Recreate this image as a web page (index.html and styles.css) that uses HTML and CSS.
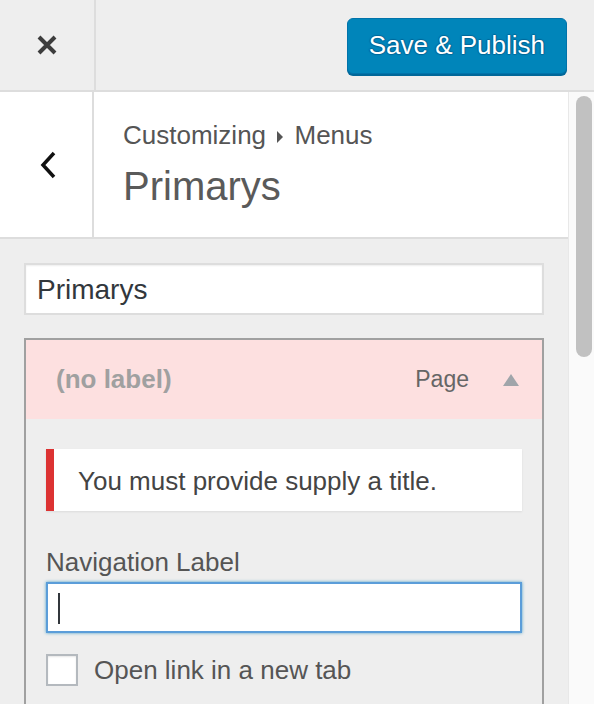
FILE: index.html
```html
<!DOCTYPE html>
<html lang="en">

<head>
    <meta charset="UTF-8">
    <meta name="viewport" content="width=device-width, initial-scale=1.0">
    <title>Customizing Menus</title>
    <link rel="stylesheet" href="styles.css">
</head>

<body>
    <div class="topbar">
        <div class="close-btn">
            <svg width="22" height="22" viewBox="0 0 22 22">
                <path d="M3 3 L19 19 M19 3 L3 19" stroke="#3c3c3c" stroke-width="4" fill="none" />
            </svg>
        </div>
        <div class="save-btn">Save &amp; Publish</div>
    </div>

    <div class="main">
        <div class="panel">
            <div class="section-head">
                <div class="back-btn">
                    <svg width="16" height="28" viewBox="0 0 16 28">
                        <path d="M14 2 L3 14 L14 26" stroke="#111" stroke-width="3.5" fill="none" />
                    </svg>
                </div>
                <div class="section-info">
                    <div class="crumbs">Customizing <span class="crumb-arrow"></span> Menus</div>
                    <div class="section-title">Primarys</div>
                </div>
            </div>

            <div class="content">
                <div class="menu-name">Primarys</div>

                <div class="menu-item">
                    <div class="item-head">
                        <span class="item-title">(no label)</span>
                        <span class="item-type">Page</span>
                        <span class="item-toggle"></span>
                    </div>
                    <div class="item-body">
                        <div class="notice">You must provide supply a title.</div>
                        <div class="field-label">Navigation Label</div>
                        <div class="field-input"><span class="caret"></span></div>
                        <div class="check-row">
                            <span class="checkbox"></span>
                            <span>Open link in a new tab</span>
                        </div>
                    </div>
                </div>
            </div>
        </div>
        <div class="scrollbar">
            <div class="thumb"></div>
        </div>
    </div>
</body>

</html>
```

FILE: styles.css
```css
body {
    margin: 0;
    width: 594px;
    height: 704px;
    overflow: hidden;
    background: #eeeeee;
    font-family: "Liberation Sans", Arial, sans-serif;
    color: #555;
}

.topbar {
    height: 90px;
    border-bottom: 2px solid #dddddd;
    display: flex;
    align-items: center;
}

.close-btn {
    width: 94px;
    height: 90px;
    border-right: 2px solid #dddddd;
    display: flex;
    align-items: center;
    justify-content: center;
}

.save-btn {
    margin-left: auto;
    margin-right: 27px;
    margin-top: 2px;
    height: 56px;
    padding: 0 21px;
    box-sizing: border-box;
    background: #0085ba;
    border: 1px solid #0073aa;
    border-radius: 6px;
    box-shadow: 0 2px 0 #006799;
    color: #fff;
    font-size: 26px;
    line-height: 52px;
    text-shadow: 0 -1px 1px #006799, 1px 0 1px #006799, 0 1px 1px #006799, -1px 0 1px #006799;
}

.main {
    display: flex;
    height: 612px;
    overflow: hidden;
}

.panel {
    width: 568px;
    height: 612px;
    overflow: hidden;
}

.section-head {
    height: 145px;
    background: #fff;
    border-bottom: 2px solid #dddddd;
    display: flex;
}

.back-btn {
    width: 94px;
    border-right: 2px solid #dddddd;
    display: flex;
    align-items: center;
    justify-content: center;
    padding-left: 4px;
    box-sizing: border-box;
}

.section-info {
    padding: 28px 0 0 29px;
}

.crumbs {
    font-size: 26px;
    line-height: 31px;
    color: #555;
}

.crumb-arrow {
    display: inline-block;
    width: 0;
    height: 0;
    border-top: 6px solid transparent;
    border-bottom: 6px solid transparent;
    border-left: 6px solid #555;
    margin: 0 4px 1px 4px;
}

.section-title {
    margin-top: 11px;
    font-size: 40px;
    line-height: 48px;
    font-weight: 300;
    color: #5a5a5a;
}

.content {
    padding: 24px 24px 0 24px;
}

.menu-name {
    height: 52px;
    box-sizing: border-box;
    background: #fff;
    border: 2px solid #dddddd;
    box-shadow: inset 0 1px 2px rgba(0, 0, 0, 0.07);
    padding-left: 11px;
    font-size: 28px;
    line-height: 50px;
    color: #32373c;
}

.menu-item {
    margin-top: 23px;
    border: 2px solid #a0a0a0;
    border-bottom: none;
}

.item-head {
    height: 79px;
    background: #fde0e0;
    display: flex;
    align-items: center;
    padding: 0 23px 0 30px;
}

.item-title {
    font-size: 26px;
    font-weight: bold;
    color: #a0a0a0;
}

.item-type {
    margin-left: auto;
    font-size: 23px;
    color: #666;
}

.item-toggle {
    margin-left: 34px;
    width: 0;
    height: 0;
    border-left: 8px solid transparent;
    border-right: 8px solid transparent;
    border-bottom: 12px solid #a0a5aa;
}

.item-body {
    padding: 30px 20px 60px 20px;
}

.notice {
    height: 62px;
    background: #fff;
    border-left: 8px solid #dc3232;
    box-shadow: 0 1px 2px rgba(0, 0, 0, 0.08);
    padding-left: 24px;
    font-size: 26px;
    line-height: 64px;
    color: #444;
}

.field-label {
    margin-top: 36px;
    font-size: 26px;
    line-height: 31px;
    color: #555;
}

.field-input {
    margin-top: 4px;
    height: 51px;
    box-sizing: border-box;
    background: #fff;
    border: 2px solid #5b9dd9;
    box-shadow: 0 0 3px rgba(30, 140, 190, 0.8);
    padding: 9px 0 0 10px;
}

.caret {
    display: block;
    width: 2px;
    height: 31px;
    background: #32373c;
}

.check-row {
    margin-top: 21px;
    display: flex;
    align-items: center;
    gap: 16px;
    font-size: 26px;
    color: #555;
}

.checkbox {
    width: 32px;
    height: 32px;
    box-sizing: border-box;
    background: #fff;
    border: 2px solid #b4b9be;
    box-shadow: inset 0 1px 2px rgba(0, 0, 0, 0.1);
}

.scrollbar {
    width: 25px;
    background: #fafafa;
    border-left: 1px solid #e8e8e8;
    padding-top: 4px;
}

.thumb {
    width: 16px;
    height: 261px;
    margin-left: 7px;
    background: #c1c1c1;
    border-radius: 8px;
}
```
